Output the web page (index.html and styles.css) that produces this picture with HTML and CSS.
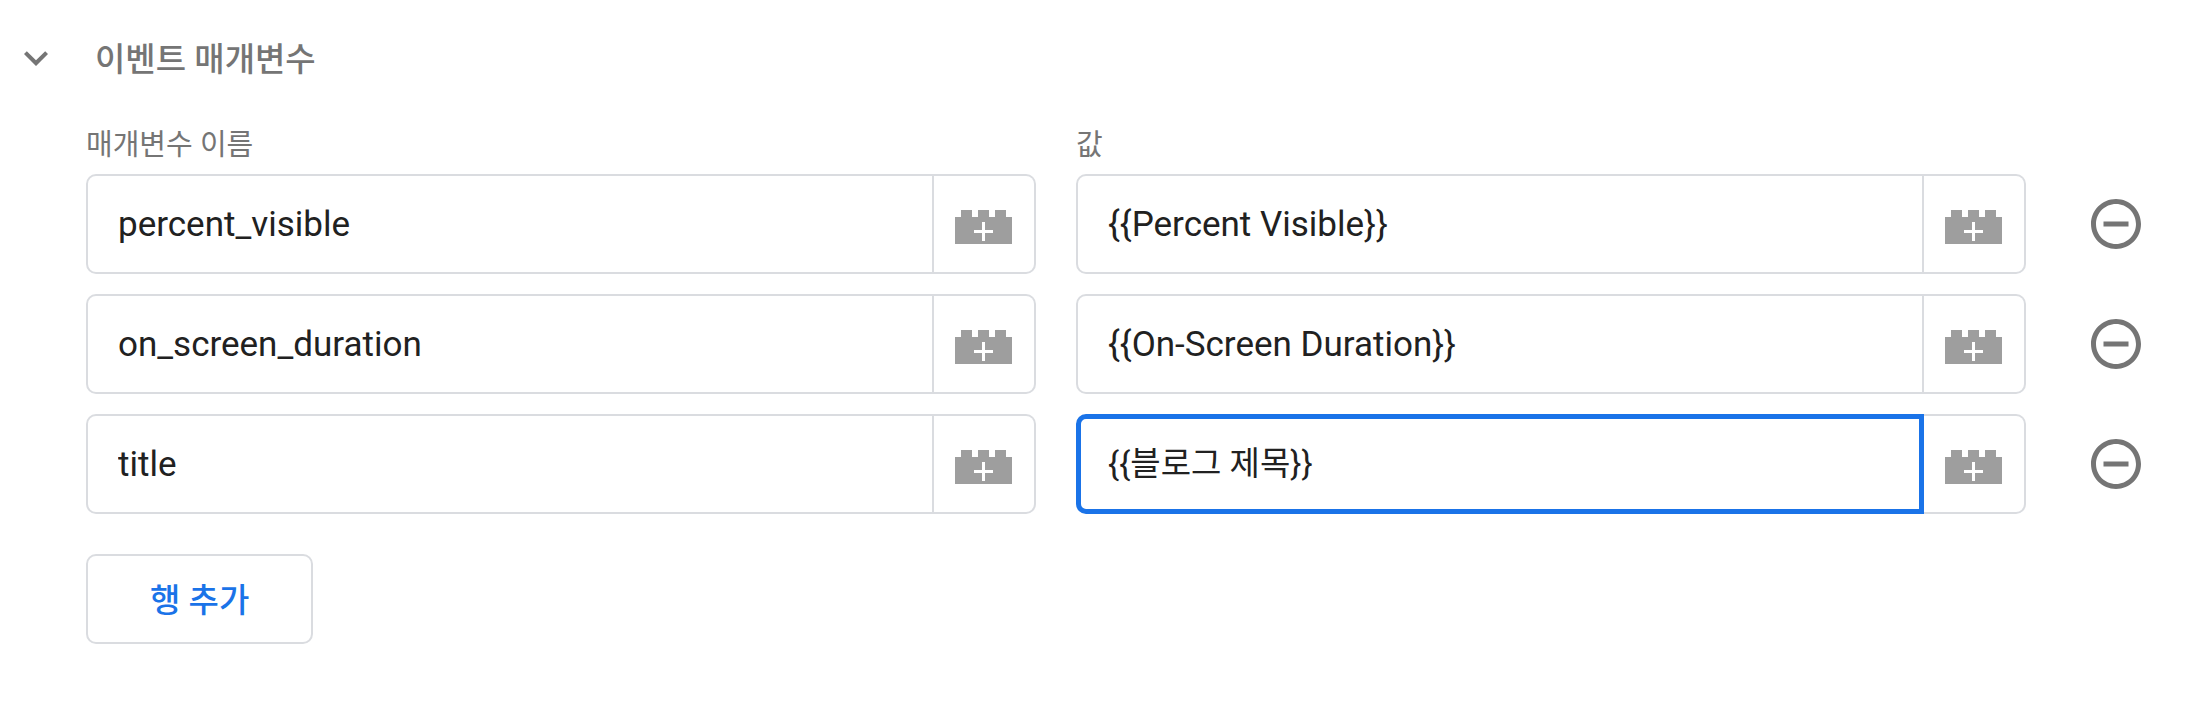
FILE: index.html
```html
<!DOCTYPE html>
<html lang="ko">
<head>
<meta charset="utf-8">
<meta name="viewport" content="width=device-width, initial-scale=1">
<title>이벤트 매개변수</title>
<link rel="stylesheet" href="styles.css">
</head>
<body>
<svg class="defs" aria-hidden="true">
  <symbol id="brick" viewBox="0 0 57 34">
    <path fill="#9e9e9e" d="M0 7H6V0H17V7H23V0H34V7H40V0H51V7H57V34H0Z"/>
    <path fill="#fff" d="M27 12h3v8h8v3h-8v8h-3v-8h-8v-3h8z"/>
  </symbol>
  <symbol id="remove" viewBox="0 0 24 24">
    <path fill="#757575" d="M7 11v2h10v-2H7zm5-9C6.48 2 2 6.48 2 12s4.48 10 10 10 10-4.480 10-10S17.520 2 12 2zm0 18c-4.410 0-8-3.590-8-8s3.590-8 8-8 8 3.590 8 8-3.590 8-8 8z"/>
  </symbol>
</svg>
<main class="section">
  <h2 class="section-title">
    <button class="toggle" type="button" aria-expanded="true">
      <svg class="chevron" viewBox="0 0 24 24" aria-hidden="true"><path fill="#757575" d="M16.590 8.590L12 13.170 7.410 8.590 6 10l6 6 6-6z"/></svg>
      <span class="toggle-text">이벤트 매개변수</span>
    </button>
  </h2>
  <form class="params">
    <div class="row labels">
      <label for="name-1">매개변수 이름</label>
      <label for="value-1">값</label>
    </div>
    <div class="row">
      <div class="field">
        <input class="text" id="name-1" type="text" value="percent_visible">
        <button class="pick" type="button" aria-label="변수 선택"><svg class="brick"><use href="#brick"/></svg></button>
      </div>
      <div class="field">
        <input class="text" id="value-1" type="text" value="{{Percent Visible}}">
        <button class="pick" type="button" aria-label="변수 선택"><svg class="brick"><use href="#brick"/></svg></button>
      </div>
      <button class="remove" type="button" aria-label="행 삭제"><svg class="minus"><use href="#remove"/></svg></button>
    </div>
    <div class="row">
      <div class="field">
        <input class="text" type="text" aria-label="매개변수 이름" value="on_screen_duration">
        <button class="pick" type="button" aria-label="변수 선택"><svg class="brick"><use href="#brick"/></svg></button>
      </div>
      <div class="field">
        <input class="text" type="text" aria-label="값" value="{{On-Screen Duration}}">
        <button class="pick" type="button" aria-label="변수 선택"><svg class="brick"><use href="#brick"/></svg></button>
      </div>
      <button class="remove" type="button" aria-label="행 삭제"><svg class="minus"><use href="#remove"/></svg></button>
    </div>
    <div class="row">
      <div class="field">
        <input class="text" type="text" aria-label="매개변수 이름" value="title">
        <button class="pick" type="button" aria-label="변수 선택"><svg class="brick"><use href="#brick"/></svg></button>
      </div>
      <div class="field">
        <input class="text hangul active" type="text" aria-label="값" value="{{블로그 제목}}">
        <button class="pick" type="button" aria-label="변수 선택"><svg class="brick"><use href="#brick"/></svg></button>
      </div>
      <button class="remove" type="button" aria-label="행 삭제"><svg class="minus"><use href="#remove"/></svg></button>
    </div>
    <button class="add" type="button">행 추가</button>
  </form>
</main>
</body>
</html>
```
FILE: styles.css
```css
* {
  box-sizing: border-box;
}

body {
  margin: 0;
  background: #fff;
  color: #212121;
  font-family: Roboto, "Noto Sans CJK KR", sans-serif;
}

button,
input {
  margin: 0;
  font: inherit;
  color: inherit;
}

button {
  padding: 0;
  border: 0;
  background: none;
  cursor: pointer;
}

svg {
  display: block;
}

.defs {
  position: absolute;
  width: 0;
  height: 0;
}

.section {
  padding: 34px 46px 58px 12px;
}

.section-title {
  margin: 0;
  font-size: 33px;
  font-weight: 500;
  line-height: 48px;
  color: #757575;
}

.toggle {
  display: flex;
  align-items: center;
  gap: 35px;
  height: 48px;
}

.toggle-text {
  padding-top: 4px;
}

.chevron {
  width: 48px;
  height: 48px;
}

.params {
  display: flex;
  flex-direction: column;
  gap: 20px;
  padding: 43px 0 0 74px;
}

.row {
  display: grid;
  grid-template-columns: 1fr 1fr 100px;
  gap: 40px;
}

.labels {
  margin-bottom: -11px;
  font-size: 29px;
  line-height: 40px;
  color: #757575;
}

.field {
  display: flex;
  height: 100px;
}

.text {
  flex: 1;
  min-width: 0;
  padding: 0 30px;
  border: 2px solid #dadce0;
  border-radius: 10px 0 0 10px;
  outline: 0;
  background: #fff;
  font-size: 35px;
}

.text.active,
.text:focus {
  padding: 0 27px;
  border: 5px solid #1a73e8;
}

.text.hangul {
  padding-bottom: 6px;
  font-size: 33px;
}

.pick {
  display: flex;
  align-items: center;
  justify-content: center;
  width: 102px;
  padding: 6px 1px 0 0;
  border: 2px solid #dadce0;
  border-left: 0;
  border-radius: 0 10px 10px 0;
}

.brick {
  width: 57px;
  height: 34px;
}

.remove {
  display: flex;
  align-items: center;
  justify-content: center;
}

.minus {
  width: 60px;
  height: 60px;
}

.add {
  align-self: flex-start;
  height: 90px;
  margin-top: 20px;
  padding: 0 62px 2px;
  border: 2px solid #dadce0;
  border-radius: 10px;
  font-size: 33px;
  font-weight: 500;
  color: #1a73e8;
}
```
